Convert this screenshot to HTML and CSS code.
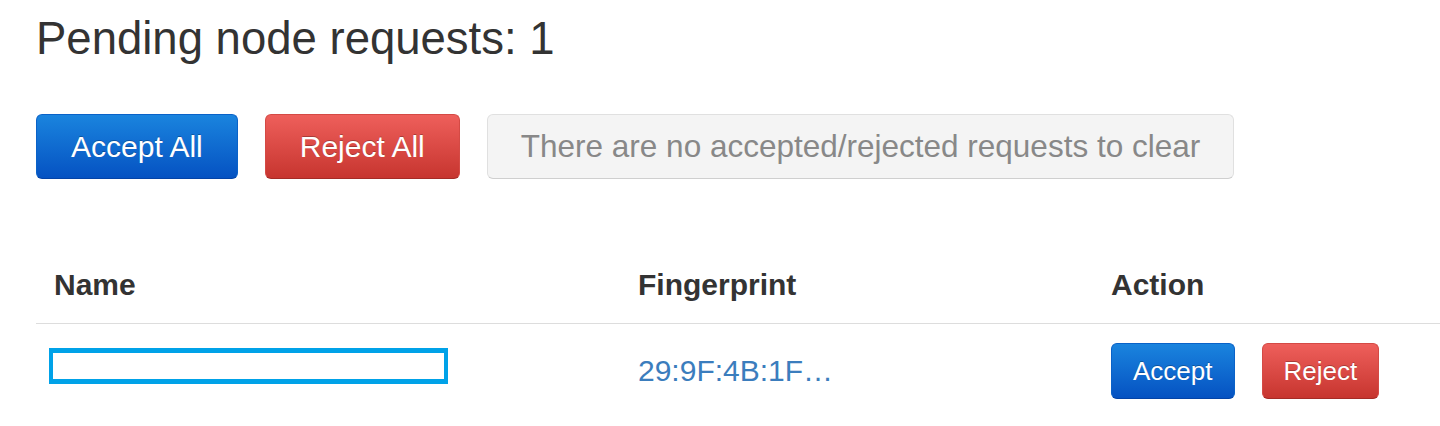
FILE: index.html
```html
<!DOCTYPE html>
<html lang="en">
<head>
  <meta charset="UTF-8" />
  <title>Pending node requests</title>
  <link rel="stylesheet" href="styles.css">
</head>
<body>
  <div class="page">
    <h3 class="title">Pending node requests: 1</h3>

    <div class="toolbar">
      <button class="btn btn-primary">Accept All</button>
      <button class="btn btn-danger">Reject All</button>
      <button class="btn btn-default" disabled>There are no accepted/rejected requests to clear</button>
    </div>

    <table class="requests">
      <colgroup>
        <col class="col-name">
        <col class="col-fp">
        <col class="col-action">
      </colgroup>
      <thead>
        <tr>
          <th>Name</th>
          <th>Fingerprint</th>
          <th>Action</th>
        </tr>
      </thead>
      <tbody>
        <tr>
          <td class="name-cell"><div class="name-box"></div></td>
          <td><a class="fingerprint">29:9F:4B:1F…</a></td>
          <td>
            <div class="actions">
              <button class="btn btn-small btn-primary">Accept</button>
              <button class="btn btn-small btn-danger">Reject</button>
            </div>
          </td>
        </tr>
      </tbody>
    </table>
  </div>
</body>
</html>
```

FILE: styles.css
```css
html, body {
  margin: 0;
  padding: 0;
  background: #fff;
}
body {
  font-family: "Liberation Sans", Arial, sans-serif;
  color: #333;
  overflow: hidden;
}
.page {
  padding-left: 36px;
}
.title {
  margin: 16px 0 0;
  font-size: 45.5px;
  line-height: 45px;
  font-weight: normal;
  color: #333;
}

.toolbar {
  display: flex;
  gap: 27px;
  margin-top: 53px;
}
.btn {
  display: inline-flex;
  align-items: center;
  justify-content: center;
  height: 65px;
  padding: 0 34px;
  font-family: inherit;
  font-size: 30px;
  border: 1px solid;
  border-radius: 6px;
  cursor: pointer;
  box-sizing: border-box;
  white-space: nowrap;
}
.btn-primary {
  color: #fff;
  background: linear-gradient(to bottom, #1a84de, #0552c2);
  border-color: #0a62c8 #0a62c8 #0443a6;
  text-shadow: 0 -1px 0 rgba(0, 0, 0, 0.25);
}
.btn-danger {
  color: #fff;
  background: linear-gradient(to bottom, #ee5f5b, #c7352f);
  border-color: #d44a45 #d44a45 #a52b26;
  text-shadow: 0 -1px 0 rgba(0, 0, 0, 0.25);
}
.btn-default {
  color: #888;
  background: #f4f4f4;
  border-color: #e0e0e0 #e0e0e0 #cfcfcf;
  font-size: 31.5px;
  padding: 0 33px;
  cursor: default;
}
.btn-small {
  height: 56px;
  padding: 0 21px;
  font-size: 26px;
}

.requests {
  margin-top: 68px;
  width: 100%;
  table-layout: fixed;
  border-collapse: collapse;
}
.col-name {
  width: 584px;
}
.col-fp {
  width: 473px;
}
.requests th {
  text-align: left;
  font-size: 30px;
  line-height: 40px;
  font-weight: bold;
  color: #333;
  padding: 18px;
  border-bottom: 1px solid #ddd;
}
.requests td {
  padding: 19px 18px 18px;
  font-size: 30px;
  line-height: 40px;
  vertical-align: middle;
}
.requests td.name-cell {
  vertical-align: top;
  padding-left: 13px;
}
.name-box {
  width: 391px;
  height: 26px;
  margin-top: 5px;
  border-style: solid;
  border-color: #00a2e8;
  border-width: 5px 4px;
}
.fingerprint {
  color: #3b7dbd;
  text-decoration: none;
}
.actions {
  display: flex;
  gap: 27px;
}
```
